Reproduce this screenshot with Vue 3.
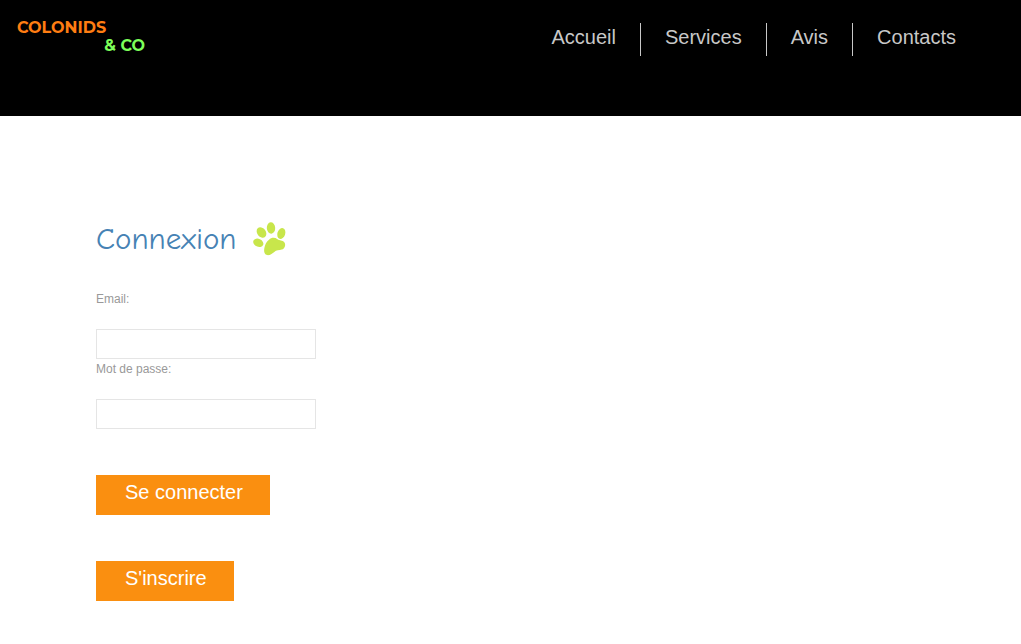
<script setup>
import { ref } from 'vue'

const links = ['Accueil', 'Services', 'Avis', 'Contacts']
const email = ref('')
const password = ref('')
</script>

<template>
  <div class="page">
    <header class="header">
      <a class="logo" href="#">
        <span class="logo-top">COLONIDS</span>
        <span class="logo-bottom">&amp; CO</span>
      </a>
      <nav class="nav">
        <a v-for="link in links" :key="link" class="nav-link" href="#">{{ link }}</a>
      </nav>
    </header>

    <main class="content">
      <h1 class="title">
        Connexion
        <svg class="paw" viewBox="0 0 34 34" aria-hidden="true">
          <ellipse cx="18" cy="6" rx="4.2" ry="5.7" transform="rotate(-4 18 6)" />
          <ellipse cx="8.5" cy="10.5" rx="4.3" ry="5.7" transform="rotate(-38 8.5 10.5)" />
          <ellipse cx="28.3" cy="11.5" rx="3.9" ry="5.6" transform="rotate(18 28.3 11.5)" />
          <ellipse cx="5.3" cy="20.8" rx="3.9" ry="5.3" transform="rotate(-65 5.3 20.8)" />
          <path d="M16 17.7C18.5 15.3 22 15.3 24.5 17.2C26.5 18.8 29.5 18 31.3 20.2C33.2 22.6 31.8 26.8 28.8 27.6C26 28.3 23.5 28 21 30.2C18.5 32.2 16 34 13.3 32.8C10.5 31.3 11 27.5 11.6 25C12.3 22 13.5 19.8 16 17.7Z" />
        </svg>
      </h1>
      <form class="form" @submit.prevent>
        <label class="label" for="email">Email:</label>
        <input id="email" v-model="email" class="field" type="email" />
        <label class="label" for="password">Mot de passe:</label>
        <input id="password" v-model="password" class="field" type="password" />
        <button class="button" type="submit">Se connecter</button>
        <button class="button" type="button">S'inscrire</button>
      </form>
    </main>
  </div>
</template>

<style>
body {
  margin: 0;
  background: #fff;
}
</style>

<style scoped>
.page {
  font-family: Arial, "Liberation Sans", sans-serif;
}

.header {
  display: flex;
  justify-content: space-between;
  align-items: flex-start;
  box-sizing: border-box;
  min-height: 116px;
  padding: 19px 41px 0 17px;
  background: #000;
}

.logo {
  display: flex;
  flex-direction: column;
  width: 128px;
  font: 700 16px/18px Montserrat, Inter, sans-serif;
  text-decoration: none;
}

.logo-top {
  color: #ff7d12;
}

.logo-bottom {
  align-self: flex-end;
  color: #7dff5a;
}

.nav {
  display: flex;
  padding-top: 4px;
}

.nav-link {
  height: 33px;
  padding: 0 24px;
  color: #c8c8c8;
  font-size: 20px;
  line-height: 28px;
  text-decoration: none;
}

.nav-link + .nav-link {
  border-left: 1px solid #c8c8c8;
}

.content {
  padding: 104px 96px 40px;
}

.title {
  display: flex;
  align-items: center;
  gap: 16px;
  margin: 0 0 32px;
  color: #4682b4;
  font: 400 31px/38px "Comic Sans MS", "Comic Neue", Lato, sans-serif;
}

.paw {
  width: 34px;
  height: 34px;
  fill: #c8e64b;
}

.form {
  display: flex;
  flex-direction: column;
  align-items: flex-start;
}

.label {
  margin-bottom: 21px;
  color: #999;
  font-size: 12px;
  line-height: 18px;
}

.field {
  box-sizing: border-box;
  width: 220px;
  height: 30px;
  margin-bottom: 1px;
  padding: 4px 8px;
  border: 1px solid #e5e5e5;
  background: #fff;
  color: #999;
  font: inherit;
  font-size: 12px;
}

.button {
  margin: 45px 0 0;
  padding: 6px 27px 11px 29px;
  border: 0;
  background: #fa8f10;
  color: #fff;
  font: inherit;
  font-size: 20px;
  line-height: 23px;
  cursor: pointer;
}

.button + .button {
  margin-top: 46px;
}
</style>
